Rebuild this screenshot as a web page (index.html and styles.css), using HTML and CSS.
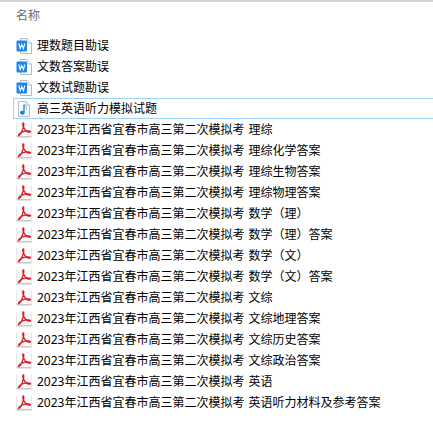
FILE: index.html
```html
<!DOCTYPE html>
<html lang="zh">
<head>
<meta charset="utf-8">
<title>名称</title>
<link rel="stylesheet" href="styles.css">
</head>
<body>
<svg class="defs" width="0" height="0">
  <symbol id="word" viewBox="0 0 16 16">
    <path d="M4.500 .5H11L15.500 5V15.500H4.500Z" fill="#fff" stroke="#b4b8bc"/>
    <path d="M11 .5V5H15.500" fill="#eef0f2" stroke="#c4c8cc"/>
    <rect x="0.500" y="2.500" width="10.500" height="11" rx="1" fill="#1b86ee"/>
    <path d="M2.800 5.500L4.200 10.500L5.800 6.500L7.400 10.500L8.800 5.500" fill="none" stroke="#fff" stroke-width="1.100"/>
  </symbol>
  <symbol id="audio" viewBox="0 0 16 16">
    <path d="M2.500 .5H10L13.500 4V15.500H2.500Z" fill="#fbfcfd" stroke="#b9bdc2"/>
    <path d="M10 .5V4H13.500" fill="#e4e7ea" stroke="#b9bdc2"/>
    <path d="M8 3.500V11.500" stroke="#1f8fd8" stroke-width="1.400" fill="none"/>
    <path d="M8.500 3.500C9 5.500 11 6 10.500 8.500" stroke="#5bb3e8" stroke-width="1" fill="none"/>
    <ellipse cx="6.300" cy="11.700" rx="2.400" ry="2" fill="#1587d6"/>
  </symbol>
  <symbol id="pdf" viewBox="0 0 16 16">
    <rect x="0.500" y="0.500" width="15" height="14.500" fill="#fafafa"/>
    <rect x="0.500" y="14" width="15" height="1.500" fill="#c8c8c8"/>
    <path d="M.5 .5V14M15.500 .5V14" stroke="#e8e8e8" fill="none"/>
    <path d="M7 1C6.300 2.500 7.500 5.500 9.300 8C10.500 9.500 13 10.700 14.500 10C15 9.300 13 8.700 11 8.800C8 9 4 10.500 2.500 13C2 14 3.500 13.500 4.500 12C6 10 8.100 4 7.800 2C7.700 1 7.400 .8 7 1Z" fill="none" stroke="#d3202c" stroke-width="1.300"/>
  </symbol>
</svg>
<main class="list">
  <div class="header">名称</div>
  <ul class="rows">
    <li class="row"><svg class="icon"><use href="#word"/></svg><span>理数题目勘误</span></li>
    <li class="row"><svg class="icon"><use href="#word"/></svg><span>文数答案勘误</span></li>
    <li class="row"><svg class="icon"><use href="#word"/></svg><span>文数试题勘误</span></li>
    <li class="row selected"><svg class="icon"><use href="#audio"/></svg><span>高三英语听力模拟试题</span></li>
    <li class="row"><svg class="icon"><use href="#pdf"/></svg><span>2023年江西省宜春市高三第二次模拟考 理综</span></li>
    <li class="row"><svg class="icon"><use href="#pdf"/></svg><span>2023年江西省宜春市高三第二次模拟考 理综化学答案</span></li>
    <li class="row"><svg class="icon"><use href="#pdf"/></svg><span>2023年江西省宜春市高三第二次模拟考 理综生物答案</span></li>
    <li class="row"><svg class="icon"><use href="#pdf"/></svg><span>2023年江西省宜春市高三第二次模拟考 理综物理答案</span></li>
    <li class="row"><svg class="icon"><use href="#pdf"/></svg><span>2023年江西省宜春市高三第二次模拟考 数学（理）</span></li>
    <li class="row"><svg class="icon"><use href="#pdf"/></svg><span>2023年江西省宜春市高三第二次模拟考 数学（理）答案</span></li>
    <li class="row"><svg class="icon"><use href="#pdf"/></svg><span>2023年江西省宜春市高三第二次模拟考 数学（文）</span></li>
    <li class="row"><svg class="icon"><use href="#pdf"/></svg><span>2023年江西省宜春市高三第二次模拟考 数学（文）答案</span></li>
    <li class="row"><svg class="icon"><use href="#pdf"/></svg><span>2023年江西省宜春市高三第二次模拟考 文综</span></li>
    <li class="row"><svg class="icon"><use href="#pdf"/></svg><span>2023年江西省宜春市高三第二次模拟考 文综地理答案</span></li>
    <li class="row"><svg class="icon"><use href="#pdf"/></svg><span>2023年江西省宜春市高三第二次模拟考 文综历史答案</span></li>
    <li class="row"><svg class="icon"><use href="#pdf"/></svg><span>2023年江西省宜春市高三第二次模拟考 文综政治答案</span></li>
    <li class="row"><svg class="icon"><use href="#pdf"/></svg><span>2023年江西省宜春市高三第二次模拟考 英语</span></li>
    <li class="row"><svg class="icon"><use href="#pdf"/></svg><span>2023年江西省宜春市高三第二次模拟考 英语听力材料及参考答案</span></li>
  </ul>
</main>
</body>
</html>
```

FILE: styles.css
```css
html, body {
  margin: 0;
  padding: 0;
  background: #fff;
}
body {
  width: 433px;
  height: 425px;
  overflow: hidden;
  font-family: "Noto Sans", "Noto Sans CJK SC", sans-serif;
  font-size: 12px;
  word-spacing: 1px;
  color: #000;
}
.defs {
  display: block;
  height: 0;
}
.list {
  border-top: 2px solid #d4d4d4;
}
.header {
  height: 33px;
  padding-left: 16px;
  line-height: 27px;
  color: #6d6d6d;
}
.rows {
  list-style: none;
  margin: 0;
  padding: 0 0 0 13px;
}
.row {
  display: flex;
  align-items: center;
  gap: 5px;
  height: 21px;
  padding-left: 3px;
  white-space: nowrap;
  line-height: 21px;
}
.selected {
  box-sizing: border-box;
  border: 1px solid #99d1ff;
  border-right: 0;
  padding-left: 2px;
}
.icon {
  width: 16px;
  height: 16px;
  flex: none;
}
```
